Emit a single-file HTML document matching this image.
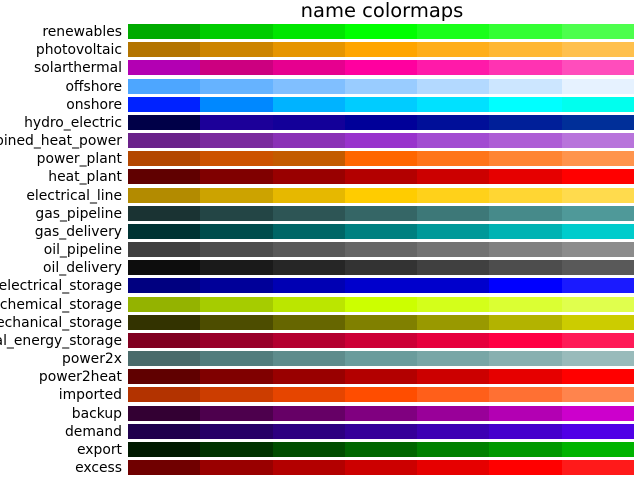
<!DOCTYPE html>
<html><head><meta charset="utf-8"><style>
body{margin:0;width:640px;height:480px;background:#fff;position:relative;overflow:hidden;font-family:"DejaVu Sans","Liberation Sans",sans-serif;}
h1{position:absolute;left:0;width:764px;top:-1px;margin:0;text-align:center;font-weight:normal;font-size:19.5px;color:#000;white-space:nowrap;}
.r{position:absolute;left:0;height:15px;width:640px;overflow:visible;}
.r span.l{position:absolute;right:518px;top:-1px;font-size:13.9px;line-height:18px;color:#000;white-space:nowrap;}
.r .b{position:absolute;left:128px;width:506px;height:100%;display:flex;}
.r .b i{flex:1;}
#w{position:absolute;left:0;top:0;width:640px;height:480px;overflow:hidden;}
</style></head><body><div id="w">
<h1>name colormaps</h1>
<div class="r" style="top:24px"><span class="l">renewables</span><div class="b"><i style="background:#00aa00"></i><i style="background:#00cc00"></i><i style="background:#00e600"></i><i style="background:#00ff00"></i><i style="background:#1aff1a"></i><i style="background:#33ff33"></i><i style="background:#4dff4d"></i></div></div>
<div class="r" style="top:42.2px"><span class="l">photovoltaic</span><div class="b"><i style="background:#b37400"></i><i style="background:#cc8400"></i><i style="background:#e69500"></i><i style="background:#ffa500"></i><i style="background:#ffae1a"></i><i style="background:#ffb733"></i><i style="background:#ffc04d"></i></div></div>
<div class="r" style="top:60.3px"><span class="l">solarthermal</span><div class="b"><i style="background:#b300b3"></i><i style="background:#cc0080"></i><i style="background:#e6008f"></i><i style="background:#ff009f"></i><i style="background:#ff1aa9"></i><i style="background:#ff33b2"></i><i style="background:#ff4dbc"></i></div></div>
<div class="r" style="top:78.5px"><span class="l">offshore</span><div class="b"><i style="background:#4da6ff"></i><i style="background:#66b3ff"></i><i style="background:#80bfff"></i><i style="background:#99ccff"></i><i style="background:#b3d9ff"></i><i style="background:#cce6ff"></i><i style="background:#e6f2ff"></i></div></div>
<div class="r" style="top:96.7px"><span class="l">onshore</span><div class="b"><i style="background:#0022ff"></i><i style="background:#0088ff"></i><i style="background:#00b3ff"></i><i style="background:#00ccff"></i><i style="background:#00e1ff"></i><i style="background:#00ffff"></i><i style="background:#00ffee"></i></div></div>
<div class="r" style="top:114.8px"><span class="l">hydro_electric</span><div class="b"><i style="background:#000048"></i><i style="background:#1c0099"></i><i style="background:#130099"></i><i style="background:#000099"></i><i style="background:#000f99"></i><i style="background:#001f99"></i><i style="background:#002f99"></i></div></div>
<div class="r" style="top:133px"><span class="l">combined_heat_power</span><div class="b"><i style="background:#6a228a"></i><i style="background:#7a2a9e"></i><i style="background:#8a31b6"></i><i style="background:#9933cc"></i><i style="background:#a24cd1"></i><i style="background:#ad5ed5"></i><i style="background:#b874db"></i></div></div>
<div class="r" style="top:151.2px"><span class="l">power_plant</span><div class="b"><i style="background:#b34700"></i><i style="background:#cc5200"></i><i style="background:#c35b00"></i><i style="background:#ff6600"></i><i style="background:#ff751a"></i><i style="background:#ff8533"></i><i style="background:#ff944d"></i></div></div>
<div class="r" style="top:169.4px"><span class="l">heat_plant</span><div class="b"><i style="background:#600000"></i><i style="background:#800000"></i><i style="background:#990000"></i><i style="background:#b30000"></i><i style="background:#cc0000"></i><i style="background:#e60000"></i><i style="background:#ff0000"></i></div></div>
<div class="r" style="top:187.5px"><span class="l">electrical_line</span><div class="b"><i style="background:#b38b00"></i><i style="background:#cca300"></i><i style="background:#e6b800"></i><i style="background:#ffcc00"></i><i style="background:#ffd11a"></i><i style="background:#ffd633"></i><i style="background:#ffdb4d"></i></div></div>
<div class="r" style="top:205.7px"><span class="l">gas_pipeline</span><div class="b"><i style="background:#1a3333"></i><i style="background:#234545"></i><i style="background:#2d5555"></i><i style="background:#356666"></i><i style="background:#3d7878"></i><i style="background:#468a8a"></i><i style="background:#4f9999"></i></div></div>
<div class="r" style="top:223.9px"><span class="l">gas_delivery</span><div class="b"><i style="background:#003333"></i><i style="background:#004d4d"></i><i style="background:#006666"></i><i style="background:#008080"></i><i style="background:#009999"></i><i style="background:#00b3b3"></i><i style="background:#00cccc"></i></div></div>
<div class="r" style="top:242px"><span class="l">oil_pipeline</span><div class="b"><i style="background:#404040"></i><i style="background:#4d4d4d"></i><i style="background:#595959"></i><i style="background:#666666"></i><i style="background:#737373"></i><i style="background:#808080"></i><i style="background:#8c8c8c"></i></div></div>
<div class="r" style="top:260.2px"><span class="l">oil_delivery</span><div class="b"><i style="background:#0d0d0d"></i><i style="background:#1a1a1a"></i><i style="background:#262626"></i><i style="background:#333333"></i><i style="background:#404040"></i><i style="background:#4d4d4d"></i><i style="background:#595959"></i></div></div>
<div class="r" style="top:278.4px"><span class="l">electrical_storage</span><div class="b"><i style="background:#000080"></i><i style="background:#000099"></i><i style="background:#0000b3"></i><i style="background:#0000cc"></i><i style="background:#0000cc"></i><i style="background:#0000ff"></i><i style="background:#1a1aff"></i></div></div>
<div class="r" style="top:296.5px"><span class="l">chemical_storage</span><div class="b"><i style="background:#94b300"></i><i style="background:#a6cc00"></i><i style="background:#bbe600"></i><i style="background:#ccff00"></i><i style="background:#d4ff1a"></i><i style="background:#dbff33"></i><i style="background:#e0ff4d"></i></div></div>
<div class="r" style="top:314.7px"><span class="l">mechanical_storage</span><div class="b"><i style="background:#333300"></i><i style="background:#4d4d00"></i><i style="background:#666600"></i><i style="background:#808000"></i><i style="background:#999900"></i><i style="background:#b3b300"></i><i style="background:#cccc00"></i></div></div>
<div class="r" style="top:332.9px"><span class="l">thermal_energy_storage</span><div class="b"><i style="background:#800020"></i><i style="background:#990029"></i><i style="background:#b3002f"></i><i style="background:#cc0036"></i><i style="background:#e6003d"></i><i style="background:#ff0044"></i><i style="background:#ff1a57"></i></div></div>
<div class="r" style="top:351px"><span class="l">power2x</span><div class="b"><i style="background:#4a6b6b"></i><i style="background:#527d7d"></i><i style="background:#5e8c8c"></i><i style="background:#6a9c9c"></i><i style="background:#78a6a6"></i><i style="background:#88b0b0"></i><i style="background:#99bbbb"></i></div></div>
<div class="r" style="top:369.2px"><span class="l">power2heat</span><div class="b"><i style="background:#600000"></i><i style="background:#800000"></i><i style="background:#990000"></i><i style="background:#b30000"></i><i style="background:#cc0000"></i><i style="background:#e60000"></i><i style="background:#ff0000"></i></div></div>
<div class="r" style="top:387.4px"><span class="l">imported</span><div class="b"><i style="background:#b33300"></i><i style="background:#cc3d00"></i><i style="background:#e64500"></i><i style="background:#ff4d00"></i><i style="background:#ff5f1a"></i><i style="background:#ff7033"></i><i style="background:#ff844d"></i></div></div>
<div class="r" style="top:405.5px"><span class="l">backup</span><div class="b"><i style="background:#330033"></i><i style="background:#4d004d"></i><i style="background:#660066"></i><i style="background:#800080"></i><i style="background:#990099"></i><i style="background:#b300b3"></i><i style="background:#cc00cc"></i></div></div>
<div class="r" style="top:423.7px"><span class="l">demand</span><div class="b"><i style="background:#1f004d"></i><i style="background:#260066"></i><i style="background:#2d0080"></i><i style="background:#350099"></i><i style="background:#3d00b3"></i><i style="background:#4500cc"></i><i style="background:#5000e6"></i></div></div>
<div class="r" style="top:441.9px"><span class="l">export</span><div class="b"><i style="background:#001a00"></i><i style="background:#003300"></i><i style="background:#004d00"></i><i style="background:#006600"></i><i style="background:#008000"></i><i style="background:#009900"></i><i style="background:#00b300"></i></div></div>
<div class="r" style="top:460px"><span class="l">excess</span><div class="b"><i style="background:#700000"></i><i style="background:#990000"></i><i style="background:#b30000"></i><i style="background:#cc0000"></i><i style="background:#e60000"></i><i style="background:#ff0000"></i><i style="background:#ff1a1a"></i></div></div>
</div></body></html>
